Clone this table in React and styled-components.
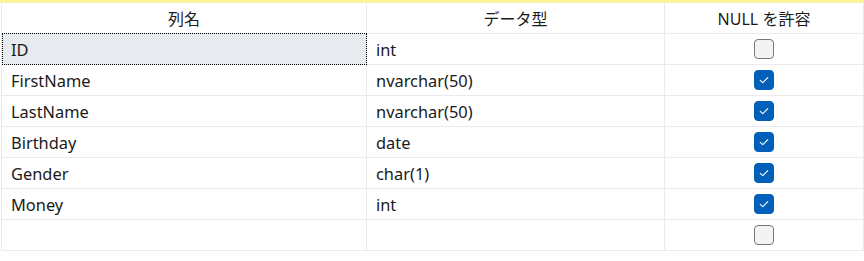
import React from "react";
import styled, { createGlobalStyle } from "styled-components";

const Global = createGlobalStyle`
  html, body { margin: 0; padding: 0; background: #ffffff; }
  body { font-family: "Noto Sans", "Noto Sans CJK JP", sans-serif; }
`;

const Page = styled.div`
  width: 864px;
  height: 261px;
  background: #ffffff;
  overflow: hidden;
`;

const TopStrip = styled.div`
  height: 3px;
  background: #fdf29c;
`;

const Grid = styled.div`
  margin-left: 1px;
  display: grid;
  grid-template-columns: 365px 298px 199px;
  border-left: 1px solid #ebebeb;
  color: #1a1a1a;
  font-size: 16.4px;
`;

const HeaderCell = styled.div`
  height: 30px;
  display: flex;
  align-items: center;
  justify-content: center;
  border-right: 1px solid #ebebeb;
  border-bottom: 1px solid #ebebeb;
  font-family: "Noto Sans", "Noto Sans CJK JP", sans-serif;
  font-size: 16px;
  color: #1b1b1b;
`;

const Cell = styled.div`
  position: relative;
  height: 30px;
  display: flex;
  align-items: center;
  justify-content: ${(p) => (p.$center ? "center" : "flex-start")};
  padding-left: ${(p) => (p.$center ? "0" : "9px")};
  border-right: 1px solid #ebebeb;
  border-bottom: 1px solid #ebebeb;
  background: ${(p) => (p.$selected ? "#e7ebef" : "#ffffff")};
  white-space: nowrap;

  ${(p) =>
    p.$selected &&
    `
    &::after {
      content: "";
      position: absolute;
      top: -1px;
      left: 0;
      right: -1px;
      bottom: -1px;
      border: 1px dotted #000000;
      pointer-events: none;
    }
  `}
`;

const Box = styled.span`
  width: 18px;
  height: 18px;
  border-radius: 4px;
  display: inline-flex;
  align-items: center;
  justify-content: center;
  background: ${(p) => (p.$checked ? "#005fb8" : "#f3f3f3")};
  border: 1px solid ${(p) => (p.$checked ? "#005fb8" : "#787878")};
`;

function CheckBox({ checked }) {
  return (
    <Box $checked={checked}>
      {checked && (
        <svg width="12" height="12" viewBox="0 0 12 12">
          <path
            d="M2.2 6.3 L4.8 8.7 L9.8 3.6"
            fill="none"
            stroke="#ffffff"
            strokeWidth="1.1"
            strokeLinecap="round"
            strokeLinejoin="round"
          />
        </svg>
      )}
    </Box>
  );
}

const rows = [
  { name: "ID", type: "int", nullable: false },
  { name: "FirstName", type: "nvarchar(50)", nullable: true },
  { name: "LastName", type: "nvarchar(50)", nullable: true },
  { name: "Birthday", type: "date", nullable: true },
  { name: "Gender", type: "char(1)", nullable: true },
  { name: "Money", type: "int", nullable: true },
  { name: "", type: "", nullable: false },
];

export default function App() {
  return (
    <Page>
      <Global />
      <TopStrip />
      <Grid>
        <HeaderCell>列名</HeaderCell>
        <HeaderCell>データ型</HeaderCell>
        <HeaderCell>NULL を許容</HeaderCell>
        {rows.map((r, i) => (
          <React.Fragment key={i}>
            <Cell $selected={i === 0}>{r.name}</Cell>
            <Cell>{r.type}</Cell>
            <Cell $center>
              <CheckBox checked={r.nullable} />
            </Cell>
          </React.Fragment>
        ))}
      </Grid>
    </Page>
  );
}
